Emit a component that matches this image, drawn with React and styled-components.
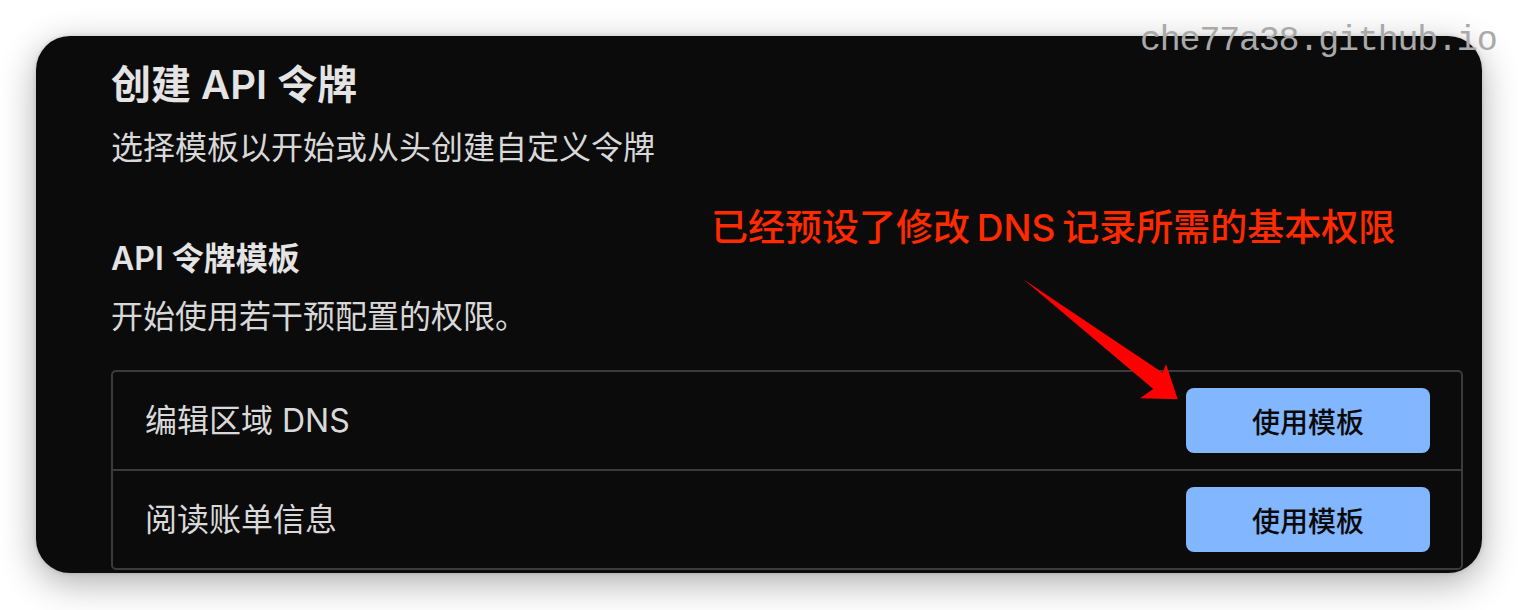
import React from 'react'
import styled, { createGlobalStyle } from 'styled-components'

const GlobalStyle = createGlobalStyle`
	html, body {
		margin: 0;
		padding: 0;
		background: #ffffff;
	}
	#root {
		width: 1518px;
		height: 610px;
		overflow: hidden;
	}
`

const templates = [
	{ id: 'dns', label: '编辑区域 DNS' },
	{ id: 'billing', label: '阅读账单信息' },
]

const App = () => {
	return (
		<S.Page>
			<GlobalStyle />
			<S.Card>
				<S.Title>创建 API 令牌</S.Title>
				<S.Subtitle>选择模板以开始或从头创建自定义令牌</S.Subtitle>

				<S.SectionTitle>API 令牌模板</S.SectionTitle>
				<S.SectionDesc>开始使用若干预配置的权限。</S.SectionDesc>

				<S.Table>
					{templates.map(t => (
						<S.Row key={t.id}>
							<S.RowLabel>{t.label}</S.RowLabel>
							<S.UseButton type="button">使用模板</S.UseButton>
						</S.Row>
					))}
				</S.Table>

				<S.Note>已经预设了修改 DNS 记录所需的基本权限</S.Note>
				<S.Arrow viewBox="0 0 180 140" width="180" height="140">
					<polygon
						points="13.3,9.3 152.7,102.7 156,94 167.7,129.3 130,128.3 143.3,119"
						fill="#ff0000"
					/>
				</S.Arrow>
			</S.Card>
			<S.Watermark>che77a38.github.io</S.Watermark>
		</S.Page>
	)
}

export default App

const S = {}

const FONT = `"Inter", "Noto Sans CJK SC", sans-serif`

S.Page = styled.div`
	position: relative;
	width: 1518px;
	height: 610px;
	padding: 36px 36px 0 36px;
	box-sizing: border-box;
	background: #ffffff;
	font-family: ${FONT};
`
S.Card = styled.div`
	position: relative;
	width: 1446px;
	height: 537px;
	box-sizing: border-box;
	padding: 29px 19px 0 75px;
	background: #0b0b0b;
	border-radius: 34px;
	overflow: hidden;
	box-shadow: 0 10px 36px rgba(0, 0, 0, 0.32), 0 0 4px rgba(0, 0, 0, 0.15);
	display: flex;
	flex-direction: column;
`
S.Title = styled.h1`
	margin: 0;
	font-size: 40px;
	line-height: 40px;
	font-weight: 600;
	color: #e4e4e4;
`
S.Subtitle = styled.p`
	margin: 23px 0 0;
	font-size: 32px;
	line-height: 40px;
	font-weight: 400;
	color: #d8d8d8;
`
S.SectionTitle = styled.h2`
	margin: 71px 0 0;
	font-size: 32px;
	line-height: 40px;
	font-weight: 600;
	color: #e4e4e4;
`
S.SectionDesc = styled.p`
	margin: 18px 0 0;
	font-size: 32px;
	line-height: 40px;
	font-weight: 400;
	color: #d8d8d8;
`
S.Table = styled.div`
	margin-top: 33px;
	border: 2px solid #3b3b3b;
	border-radius: 5px;
	display: flex;
	flex-direction: column;
	flex-shrink: 0;
`
S.Row = styled.div`
	height: 97px;
	display: flex;
	align-items: center;
	justify-content: space-between;
	padding: 0 31px 0 32px;

	& + & {
		border-top: 2px solid #3b3b3b;
	}
`
S.RowLabel = styled.span`
	font-size: 32px;
	line-height: 40px;
	color: #d9d9d9;
`
S.UseButton = styled.button`
	width: 244px;
	height: 65px;
	border: none;
	border-radius: 8px;
	background: #82b6ff;
	color: #0a0a0a;
	font-family: ${FONT};
	font-size: 28px;
	font-weight: 500;
	cursor: pointer;
`
S.Note = styled.div`
	position: absolute;
	left: 675px;
	top: 172px;
	font-size: 37px;
	line-height: 40px;
	font-weight: 500;
	color: #ff2a00;
	word-spacing: -3px;
	white-space: nowrap;
`
S.Arrow = styled.svg`
	position: absolute;
	left: 974px;
	top: 234px;
`
S.Watermark = styled.div`
	position: absolute;
	left: 1140px;
	top: 19px;
	font-family: "Liberation Mono", monospace;
	font-size: 35px;
	line-height: 44px;
	letter-spacing: -1.2px;
	color: #a9a9a9;
	white-space: nowrap;
`
